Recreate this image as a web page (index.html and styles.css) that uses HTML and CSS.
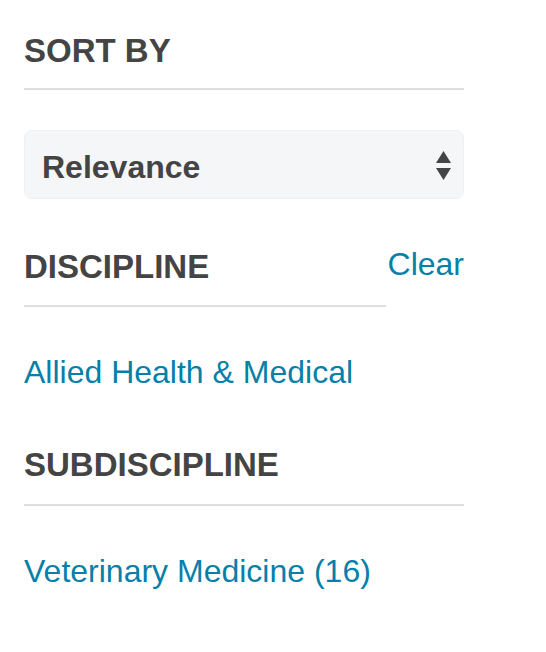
FILE: index.html
```html
<!DOCTYPE html>
<html>
<head>
<meta charset="utf-8">
<link rel="stylesheet" href="styles.css">
</head>
<body>
<aside class="filters">
  <h2 class="heading heading-sort">SORT BY</h2>
  <div class="select">
    <span class="select-value">Relevance</span>
    <svg class="select-arrows" width="15" height="29" viewBox="0 0 15 29">
      <polygon points="7.5,0 15,12 0,12" fill="#444"/>
      <polygon points="0,17 15,17 7.5,29" fill="#444"/>
    </svg>
  </div>
  <div class="heading-row">
    <h2 class="heading heading-flex">DISCIPLINE</h2>
    <a class="link clear" href="#">Clear</a>
  </div>
  <a class="link item item-first" href="#">Allied Health &amp; Medical</a>
  <h2 class="heading heading-sub">SUBDISCIPLINE</h2>
  <a class="link item" href="#">Veterinary Medicine (16)</a>
</aside>
</body>
</html>
```
FILE: styles.css
```css
html, body {
  margin: 0;
  padding: 0;
  background: #fff;
}
body {
  font-family: "Liberation Sans", Arial, Helvetica, sans-serif;
}
.filters {
  width: 440px;
  padding: 32px 0 0 24px;
  display: flex;
  flex-direction: column;
  align-items: stretch;
}
.heading {
  margin: 0;
  font-size: 33px;
  line-height: 38px;
  font-weight: bold;
  color: #444;
  padding-bottom: 18px;
  border-bottom: 2px solid #dedede;
}
.select {
  margin-top: 40px;
  height: 69px;
  box-sizing: border-box;
  padding: 19px 12px 13px 17px;
  background: #f5f6f7;
  border: 1px solid #eef0f1;
  border-radius: 8px;
  display: flex;
  justify-content: space-between;
  align-items: flex-start;
}
.select-value {
  font-size: 32px;
  line-height: 37px;
  font-weight: bold;
  color: #444;
  margin-top: -1px;
}
.select-arrows {
  margin-top: 1px;
}
.heading-row {
  margin-top: 47px;
  display: flex;
  align-items: flex-start;
}
.heading-flex {
  flex: 1;
  padding-top: 2px;
  padding-bottom: 19px;
}
.link {
  font-size: 32px;
  line-height: 37px;
  color: #067fa9;
  text-decoration: none;
}
.clear {
  margin-left: 2px;
}
.item {
  margin-top: 47px;
}
.heading-sub {
  margin-top: 55px;
  padding-bottom: 20px;
}
```
